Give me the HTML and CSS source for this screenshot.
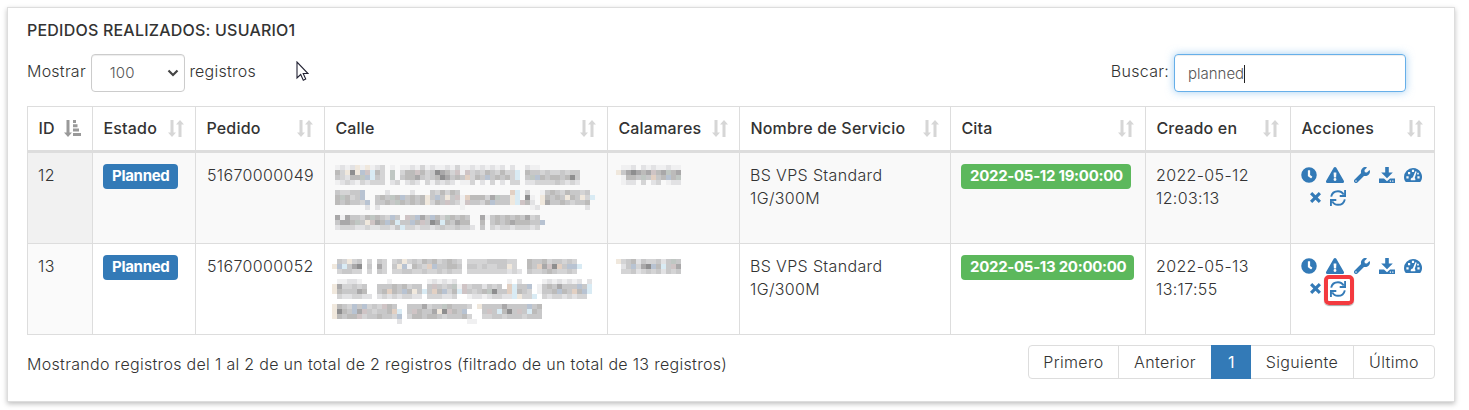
FILE: index.html
```html
<!DOCTYPE html>
<html lang="es">
<head>
<meta charset="utf-8">
<title>Pedidos realizados</title>
<link rel="stylesheet" href="styles.css">
</head>
<body>
<svg class="defs" width="0" height="0" aria-hidden="true">
  <symbol id="sort" viewBox="0 0 16 17"><path d="M2.5 0h3v12.5H8L4 17 0 12.5h2.5zM10.500 17h3V4.500H16L12 0 8 4.500h2.500z"/></symbol>
  <symbol id="sort-asc" viewBox="0 0 17 17"><path d="M2.500 0h3v12.500H8L4 17 0 12.500h2.500zM9 0h3v3H9zM9 4.300h4.500v3H9zM9 8.600h6v3H9zM9 13h8v3H9z"/></symbol>
  <symbol id="clock" viewBox="0 0 512 512"><path d="M256 8a248 248 0 1 0 0 496 248 248 0 0 0 0-496zm57 350l-88-64c-3-2-5-6-5-10V116c0-7 5-12 12-12h48c7 0 12 5 12 12v138l65 47c5 4 6 11 2 17l-28 39c-4 5-12 6-18 1z"/></symbol>
  <symbol id="warn" viewBox="0 0 576 512"><path d="M570 440c18 32-5 72-42 72H48c-37 0-60-40-42-72L246 24c19-32 65-32 84 0zM288 354a46 46 0 1 0 0 92 46 46 0 0 0 0-92zm-44-165l8 136c0 6 5 11 12 11h48c7 0 12-5 12-11l8-136c0-7-5-13-12-13h-64c-7 0-12 6-12 13z"/></symbol>
  <symbol id="wrench" viewBox="0 0 512 512"><path d="M508 109c-2-9-13-12-20-5l-74 74-68-11-11-68 74-74c7-7 4-18-5-20-48-12-102 1-140 39-40 40-51 98-36 149L19 402a64 64 0 0 0 91 91l208-209c51 15 109 4 149-36 38-38 51-91 41-139zM64 472a24 24 0 1 1 0-48 24 24 0 0 1 0 48z"/></symbol>
  <symbol id="download" viewBox="0 0 16 16"><path d="M6.200 0h3.600v5.500h4L8 11.200 2.200 5.500h4zM0 11.500h5L8 14.300l3-2.800h5V16H0zM10.800 13.500v1.200H12v-1.200zm2.400 0v1.200h1.200v-1.200z" fill-rule="evenodd"/></symbol>
  <symbol id="gauge" viewBox="0 0 18 16"><path fill-rule="evenodd" d="M9 1a9 9 0 0 0-9 9c0 1.700.5 3.200 1.300 4.600.2.300.5.400.8.400h13.800c.3 0 .6-.1.800-.4A9 9 0 0 0 9 1zM2.400 9.200h2.200v2.200H2.400zM4 5h2.200v2.200H4zM7.900 2.800h2.200V5H7.900zM13.400 9.200h2.200v2.200h-2.200zM11.400 4.300l1.300.5-2 6.200c.7.500.9 1.400.5 2.300H6.900c-.6-1.300.2-2.800 1.900-2.900zM13.200 5.700h1.600v1.800h-1.600z"/></symbol>
  <symbol id="times" viewBox="0 0 11 11"><path d="M2.200 0 5.500 3.300 8.800 0 11 2.200 7.700 5.500 11 8.800 8.800 11 5.500 7.700 2.200 11 0 8.800l3.300-3.300L0 2.200z"/></symbol>
  <symbol id="sync" viewBox="0 0 16 16"><path d="M1.200 6.700C1.800 3.400 4.500 1.200 8 1.200c2.600 0 4.600 1.300 5.700 3.400M14.800 9.300c-.6 3.300-3.300 5.500-6.800 5.500-2.600 0-4.600-1.300-5.700-3.400M15.100 0v6H9.700M.9 16v-6h5.400" fill="none" stroke="currentColor" stroke-width="1.900"/></symbol>
</svg>
<main class="card">
  <h1 class="title">PEDIDOS REALIZADOS: USUARIO1</h1>
  <div class="toolbar">
    <div class="length">Mostrar <span class="select">100<svg class="chev" viewBox="0 0 12 8"><path d="M1.500 1.500 6 6l4.500-4.500"/></svg></span> registros</div>
    <div class="filter">Buscar: <span class="input">planned<i class="caret"></i></span></div>
  </div>
  <table class="grid">
    <colgroup><col class="w-id"><col class="w-estado"><col class="w-pedido"><col class="w-calle"><col class="w-cal"><col class="w-serv"><col class="w-cita"><col class="w-creado"><col class="w-acc"></colgroup>
    <thead><tr>
      <th><div>ID<svg class="sort on"><use href="#sort-asc"/></svg></div></th>
      <th><div>Estado<svg class="sort"><use href="#sort"/></svg></div></th>
      <th><div>Pedido<svg class="sort"><use href="#sort"/></svg></div></th>
      <th><div>Calle<svg class="sort"><use href="#sort"/></svg></div></th>
      <th><div>Calamares<svg class="sort"><use href="#sort"/></svg></div></th>
      <th><div>Nombre de Servicio<svg class="sort"><use href="#sort"/></svg></div></th>
      <th><div>Cita<svg class="sort"><use href="#sort"/></svg></div></th>
      <th><div>Creado en<svg class="sort"><use href="#sort"/></svg></div></th>
      <th><div>Acciones<svg class="sort"><use href="#sort"/></svg></div></th>
    </tr></thead>
    <tbody>
      <tr class="odd">
        <td class="sorted">12</td>
        <td><span class="tag blue">Planned</span></td>
        <td class="num">51670000049</td>
        <td><svg class="mosaic street" data-mosaic="street1"></svg></td>
        <td><svg class="mosaic code" data-mosaic="code1"></svg></td>
        <td>BS VPS Standard<br>1G/300M</td>
        <td><span class="tag green">2022-05-12 19:00:00</span></td>
        <td>2022-05-12<br>12:03:13</td>
        <td class="actions"><div class="icons"><svg class="i16"><use href="#clock"/></svg><svg class="i18"><use href="#warn"/></svg><svg class="i16"><use href="#wrench"/></svg><svg class="i16"><use href="#download"/></svg><svg class="i18"><use href="#gauge"/></svg></div><div class="icons second"><svg class="i11"><use href="#times"/></svg><span class="ref"><svg class="i16"><use href="#sync"/></svg></span></div></td>
      </tr>
      <tr>
        <td class="sorted">13</td>
        <td><span class="tag blue">Planned</span></td>
        <td class="num">51670000052</td>
        <td><svg class="mosaic street lower" data-mosaic="street2"></svg></td>
        <td><svg class="mosaic code lower" data-mosaic="code2"></svg></td>
        <td>BS VPS Standard<br>1G/300M</td>
        <td><span class="tag green">2022-05-13 20:00:00</span></td>
        <td>2022-05-13<br>13:17:55</td>
        <td class="actions"><div class="icons"><svg class="i16"><use href="#clock"/></svg><svg class="i18"><use href="#warn"/></svg><svg class="i16"><use href="#wrench"/></svg><svg class="i16"><use href="#download"/></svg><svg class="i18"><use href="#gauge"/></svg></div><div class="icons second"><svg class="i11"><use href="#times"/></svg><span class="ref marked"><svg class="i16"><use href="#sync"/></svg></span></div></td>
      </tr>
    </tbody>
  </table>
  <footer class="foot">
    <div class="info">Mostrando registros del 1 al 2 de un total de 2 registros (filtrado de un total de 13 registros)</div>
    <nav class="pages"><a class="p1">Primero</a><a class="p2">Anterior</a><a class="p3 current">1</a><a class="p4">Siguiente</a><a class="p5">Último</a></nav>
  </footer>
</main>
<svg class="pointer" viewBox="0 0 13 20"><path d="M1 1v16l3.700-3.500 2.600 5.700 2.400-1.100L7.200 12.500H12z"/></svg>
<script src="mosaic.js"></script>
</body>
</html>
```
FILE: styles.css
```css
* { box-sizing: border-box; }
body { margin: 0; height: 410px; overflow: hidden; background: #fff; color: #333; font: 300 16px/23px Inter, "Liberation Sans", sans-serif; letter-spacing: .35px; }
.defs { position: absolute; }
svg { fill: currentColor; display: block; }
.card { margin: 7px 14px 0 7px; width: 1448px; height: 395px; padding: 12px 19px 0; border: 1px solid #ddd; background: #fff; box-shadow: 0 2px 5px rgba(0,0,0,.25); }
.title { margin: 0; font-size: 16px; font-weight: 500; line-height: 21px; letter-spacing: .21px; height: 34px; white-space: nowrap; }
.toolbar { display: flex; justify-content: space-between; height: 52px; padding-right: 29px; }
.length, .filter { display: flex; height: 38px; line-height: 35px; white-space: pre; }
.length { letter-spacing: .24px; }
.select { width: 94px; height: 38px; padding: 0 5px 0 18px; border: 1px solid #ccc; border-radius: 4px; display: flex; align-items: center; justify-content: space-between; font-size: 15px; line-height: 38px; color: #555; box-shadow: inset 0 1px 1px rgba(0,0,0,.075); }
.chev { width: 12px; height: 8px; fill: none; stroke: #444; stroke-width: 2.2; }
.filter { letter-spacing: .3px; }
.input { width: 232px; height: 38px; padding: 1px 13px 0; border: 1px solid #66afe9; border-radius: 4px; display: flex; align-items: center; font-size: 15px; letter-spacing: 0; color: #555; box-shadow: inset 0 1px 1px rgba(0,0,0,.075), 0 0 8px rgba(102,175,233,.6); }
.caret { width: 1px; height: 18px; background: #222; }
.grid { width: 1408px; table-layout: fixed; border-collapse: separate; border-spacing: 0; border: solid #ddd; border-width: 1px 0 0 1px; }
.w-id { width: 65px; } .w-estado { width: 103px; } .w-pedido { width: 129px; } .w-calle { width: 283px; } .w-cal { width: 132px; } .w-serv { width: 211px; } .w-cita { width: 195px; } .w-creado { width: 145px; } .w-acc { width: 144px; }
th { height: 46px; padding: 0 10.6px 0 10.4px; border: solid #ddd; border-width: 0 1px 3px 0; font-weight: 500; letter-spacing: .2px; text-align: left; white-space: nowrap; }
th div { display: flex; justify-content: space-between; align-items: center; }
.sort { width: 16px; height: 17px; color: #d6d6d6; }
.sort.on { width: 17px; color: #999; }
td { height: 91px; padding: 11px 10px 0; vertical-align: top; border: solid #ddd; border-width: 0 1px 1px 0; white-space: nowrap; }
.num { padding-left: 11px; }
.odd td { background: #f9f9f9; }
td.sorted { background: #fafafa; }
.odd td.sorted { background: #f1f1f1; }
.tag { display: block; width: max-content; height: 25px; padding: 0 8px 0 9px; border-radius: 4px; color: #fff; font-weight: 700; font-size: 15px; line-height: 24px; letter-spacing: -.29px; }
.blue { background: #337ab7; }
.green { background: #5cb85c; }
.mosaic.street { width: 265px; height: 65px; margin: 1px 0 0; }
.mosaic.code { width: 66px; height: 20px; margin: 1px 0 0 -2px; }
.mosaic.street.lower { margin: 4px 0 0 -3px; }
.mosaic.code.lower { margin-top: 4px; }
td.actions { padding: 10px 9px 0 10px; color: #337ab7; }
.icons { display: flex; gap: 9.3px; height: 23px; align-items: center; }
.icons.second { padding-left: 9px; }
.i16 { width: 16px; height: 16px; }
.i18 { width: 18px; height: 16px; }
.i11 { width: 11px; height: 11px; }
.ref { position: relative; }
.marked::after { content: ""; position: absolute; inset: -6px -8px -8px -6px; border: 4px solid #f33a3f; border-radius: 5px; box-shadow: 0 1px 1px rgba(0,0,0,.35); }
.foot { display: flex; justify-content: space-between; padding-top: 10px; }
.info { padding-top: 8px; letter-spacing: .31px; }
.pages { display: flex; height: 34px; border: 1px solid #ddd; border-radius: 4px; line-height: 33px; text-align: center; }
.pages a { border-left: 1px solid #ddd; }
.pages a.p1 { width: 89px; border-left: 0; }
.pages .p2 { width: 93px; }
.pages .current { width: 40px; margin: -1px 0; line-height: 35px; background: #337ab7; border-color: #337ab7; color: #fff; font-weight: 400; }
.pages .p4 { width: 102px; border-left: 0; }
.pages .p5 { width: 81px; }
.pointer { position: absolute; left: 296px; top: 61px; width: 13px; height: 20px; fill: #fff; stroke: #223; stroke-width: 1.1; }
```
FILE: mosaic.js
```javascript
// Pixelated cover for private fields: each character is one 5px cell.
const colors = {
  1: '#f0f0f1', 2: '#e2e2e4', 3: '#d4d4d5', 4: '#c8c8c9', 5: '#bcbbba', 6: '#a9a8a9', 7: '#8e8e8f',
  w: '#f0e8dd', o: '#e2d0c3', c: '#d9ebf4', n: '#b8c3d2', p: '#cfc4c5', g: '#c0c7c3'
};
const mosaics = {
  street1: [
    [0, '1212w1w123.1.112131211213112121212.2..211'],
    [5, '53w7wnpc53.g.355p5347653p1p343543533c.54434334344'],
    [10, '43255gnc43.g.4556434576454o354n45453c.4gn54554574'],
    [15, '1232132333.23.232.313232.113.2.3.2.33.22333343232'],
    [25, '43344n....2....2...435354..........oc.3..1454354434'],
    [30, '5g534n..454g5n4545w4n4w4p1o55536g44wc.71.w5454w54w3c'],
    [35, '545443n.4454g54545w354p431p4435n444wcp52.w644543445'],
    [40, '......2.2................1.............12.........2'],
    [50, '6164435g543n4.p4n64n53g5454..614545454634'],
    [55, '4665g4wp65n5c44n5p476c54655..5.4545655544n'],
    [60, '2333223223324c33233234334332.4.3233233323']
  ],
  street2: [
    [0, '.43w34.3.43.34w34354534543.3333444433..5445344343'],
    [5, 'wnc467.4.63.4wn1543on44554.44343344w3..54o6p7o4nnc'],
    [10, '.34433.3.43.33443343343433.33333333232.4334543343'],
    [20, '.11221.....1.......121212..........1.2....12121212.2'],
    [25, 'w633434..444545344.4p434g1p3442434.oc44n.14546444n4c'],
    [30, 'w544465..45o54n5w4c4o5n35cp4345g744oc543.1445n54o5nc'],
    [35, '.3223322.232323322.333223..122123322cw33c.323323233'],
    [45, 'w543n4n343p54..4446344g54443.w444464444n45'],
    [50, 'w754n6p43445oc.4p5446w7p54n...4p4c574p4c54'],
    [55, 'w5455p3445443n.3554554344453..334434443444'],
    [60, '.............2.............11']
  ],
  code1: [[0, '.112.21211211'], [5, 'w467656p56g56'], [10, '.1554g4o45n5g'], [15, '.122.3.23.122']],
  code2: [[0, 'w3452433424g4'], [5, '.24n367n5c4p6'], [10, '.334234342434']]
};
document.querySelectorAll('[data-mosaic]').forEach(svg => {
  mosaics[svg.dataset.mosaic].forEach(([y, cells]) => [...cells].forEach((cell, i) => {
    if (!colors[cell]) return;
    const r = document.createElementNS('http://www.w3.org/2000/svg', 'rect');
    Object.entries({ x: i * 5, y, width: 5, height: 5, fill: colors[cell] }).forEach(([k, v]) => r.setAttribute(k, v));
    svg.append(r);
  }));
});
```
